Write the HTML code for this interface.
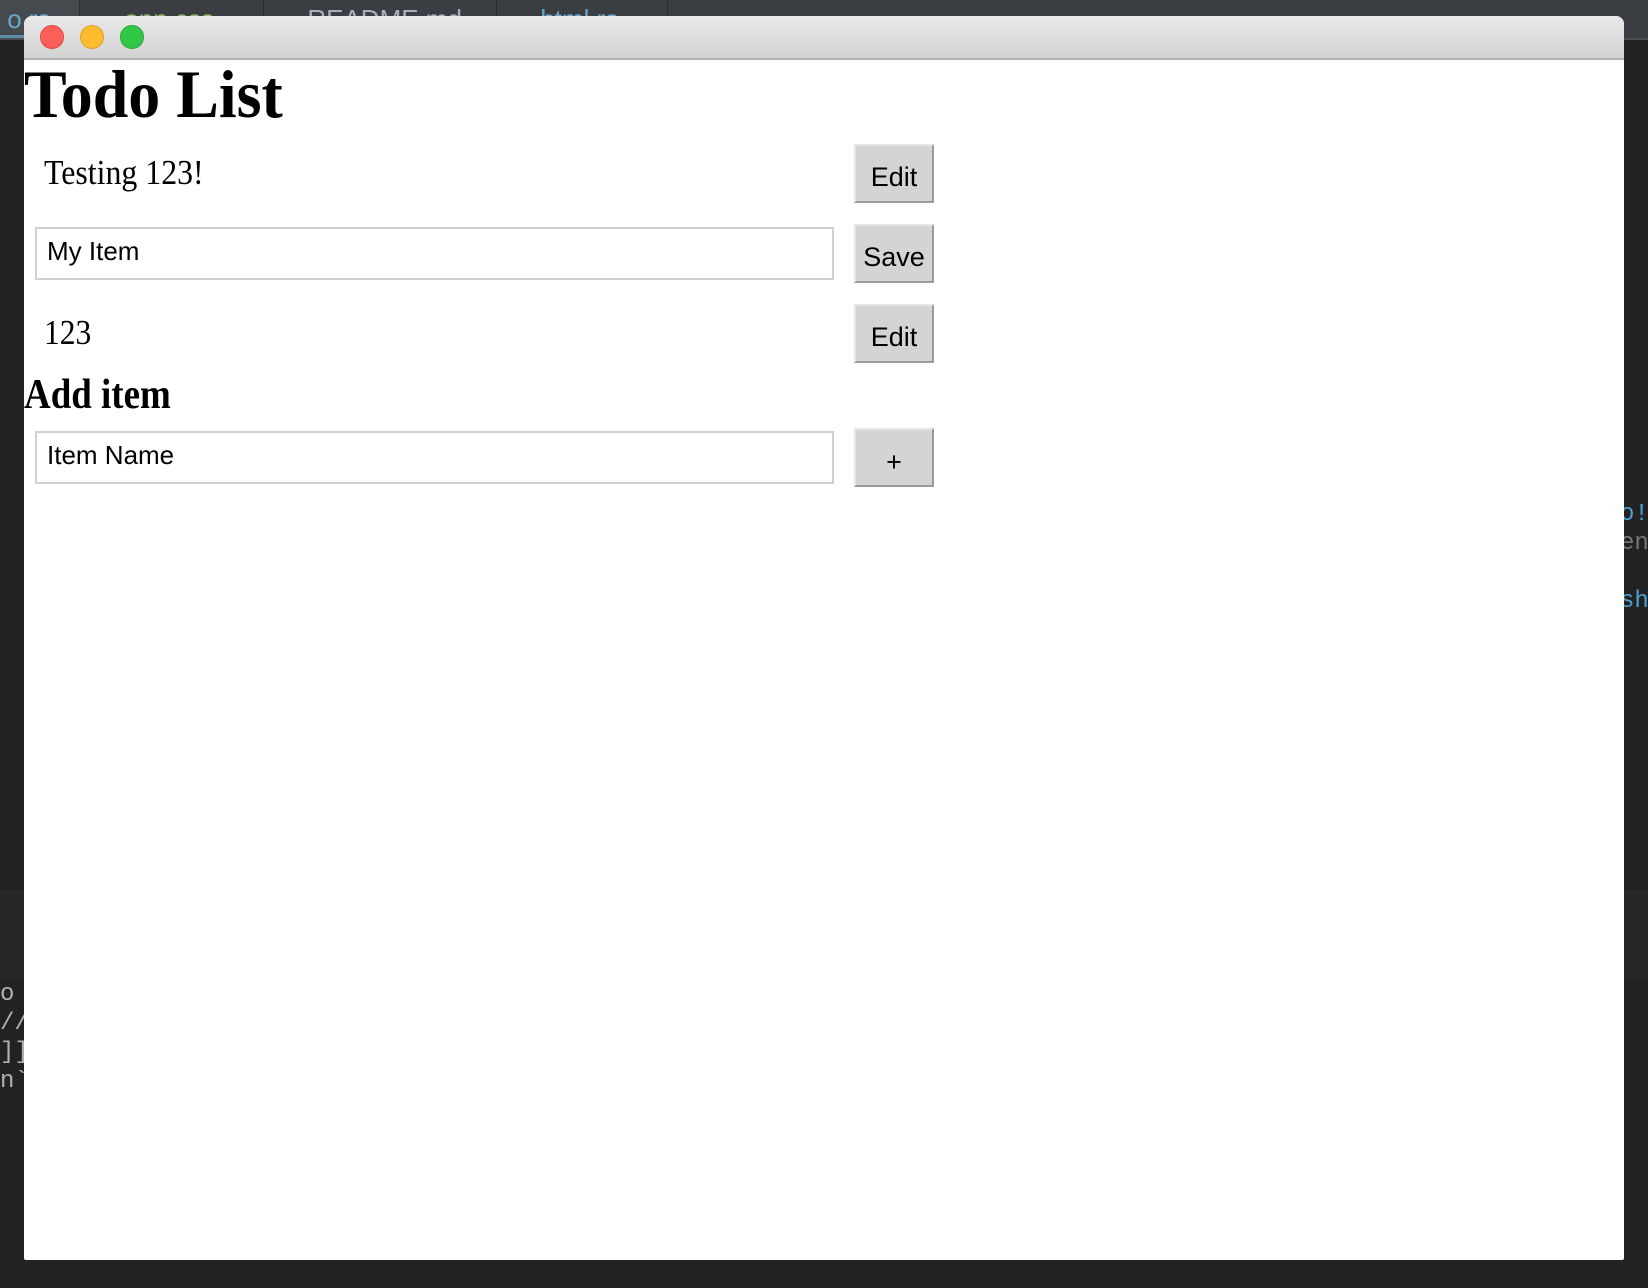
<!DOCTYPE html>
<html><head><style>
html,body{margin:0;padding:0}
body{width:1648px;height:1288px;background:#222;position:relative;overflow:hidden;font-family:"Liberation Sans",sans-serif}
.abs{position:absolute}
.top{left:0;top:0;width:1648px;height:38px;background:#3a3d41;border-bottom:2px solid #4a4d50}
.tab{position:absolute;top:0;height:38px;border-right:1px solid #2c2e31;color:#a8b0b8;font-size:26px;line-height:38px}
.win{left:24px;top:16px;width:1600px;height:1244px;background:#fff;border-radius:8px 8px 2px 2px;overflow:hidden}
.tb{left:0;top:0;width:1600px;height:42px;background:linear-gradient(#e9e9e9,#d2d2d2);border-bottom:2px solid #b3b3b3}
.dot{position:absolute;top:9px;width:24px;height:24px;border-radius:50%}
.serif{font-family:"Liberation Serif",serif;color:#000;white-space:nowrap;transform-origin:0 0}
.btn{position:absolute;left:830px;width:80px;height:59px;background:#d4d4d4;border:2px solid;border-color:#e6e6e6 #9a9a9a #9a9a9a #e6e6e6;box-sizing:border-box;font-size:27px;text-align:center;line-height:62px;color:#000}
.inp{position:absolute;left:11px;width:799px;height:53px;border:2px solid #d0d0d0;box-sizing:border-box;font-size:26px;line-height:44px;padding-left:10px;color:#000}
</style></head><body>
<div class="abs top">
 <div class="tab" style="left:0;width:80px;background:#454a4f;color:#6aa7c9;border-bottom:3px solid #5a8fa8;box-sizing:border-box">&nbsp;o.rs</div>
 <div class="tab" style="left:81px;width:182px;color:#8fb96b">&nbsp;&nbsp;&nbsp;&nbsp;&nbsp;&nbsp;app.css</div>
 <div class="tab" style="left:264px;width:232px">&nbsp;&nbsp;&nbsp;&nbsp;&nbsp;&nbsp;README.md</div>
 <div class="tab" style="left:497px;width:170px;color:#6aa7c9">&nbsp;&nbsp;&nbsp;&nbsp;&nbsp;&nbsp;html.rs</div>
</div>
<div class="abs" style="left:0;top:890px;width:24px;height:90px;background:#262729"></div>
<div class="abs" style="left:1624px;top:890px;width:24px;height:90px;background:#262729"></div>
<div class="abs" style="left:0;top:980px;color:#b0b0b0;font-family:'Liberation Mono',monospace;font-size:24px;line-height:29px">o<br>//<br>]]<br>n`</div>
<div class="abs" style="left:1620px;top:500px;color:#4a9fd5;font-family:'Liberation Mono',monospace;font-size:24px;line-height:29px">o!<br><span style="color:#777">en</span><br><br>shr</div>
<div class="abs win">
 <div class="abs tb">
  <div class="dot" style="left:16px;background:#fc5f57;border:1px solid #e0443e;box-sizing:border-box"></div>
  <div class="dot" style="left:56px;background:#fdbc2e;border:1px solid #dea123;box-sizing:border-box"></div>
  <div class="dot" style="left:96px;background:#33c748;border:1px solid #27aa35;box-sizing:border-box"></div>
 </div>
 <div class="abs serif" style="left:0;top:38px;font-size:68px;font-weight:bold;line-height:80px;transform:scaleX(0.94)">Todo List</div>
 <div class="abs serif" style="left:20px;top:135px;font-size:35px;line-height:44px;transform:scaleX(0.91)">Testing 123!</div>
 <div class="btn" style="top:128px">Edit</div>
 <div class="inp" style="top:211px">My Item</div>
 <div class="btn" style="top:208px">Save</div>
 <div class="abs serif" style="left:20px;top:295px;font-size:35px;line-height:44px;transform:scaleX(0.9)">123</div>
 <div class="btn" style="top:288px">Edit</div>
 <div class="abs serif" style="left:0;top:354px;font-size:42px;font-weight:bold;line-height:50px;transform:scaleX(0.88)">Add item</div>
 <div class="inp" style="top:415px">Item Name</div>
 <div class="btn" style="top:412px;line-height:64px">+</div>
</div>
</body></html>
